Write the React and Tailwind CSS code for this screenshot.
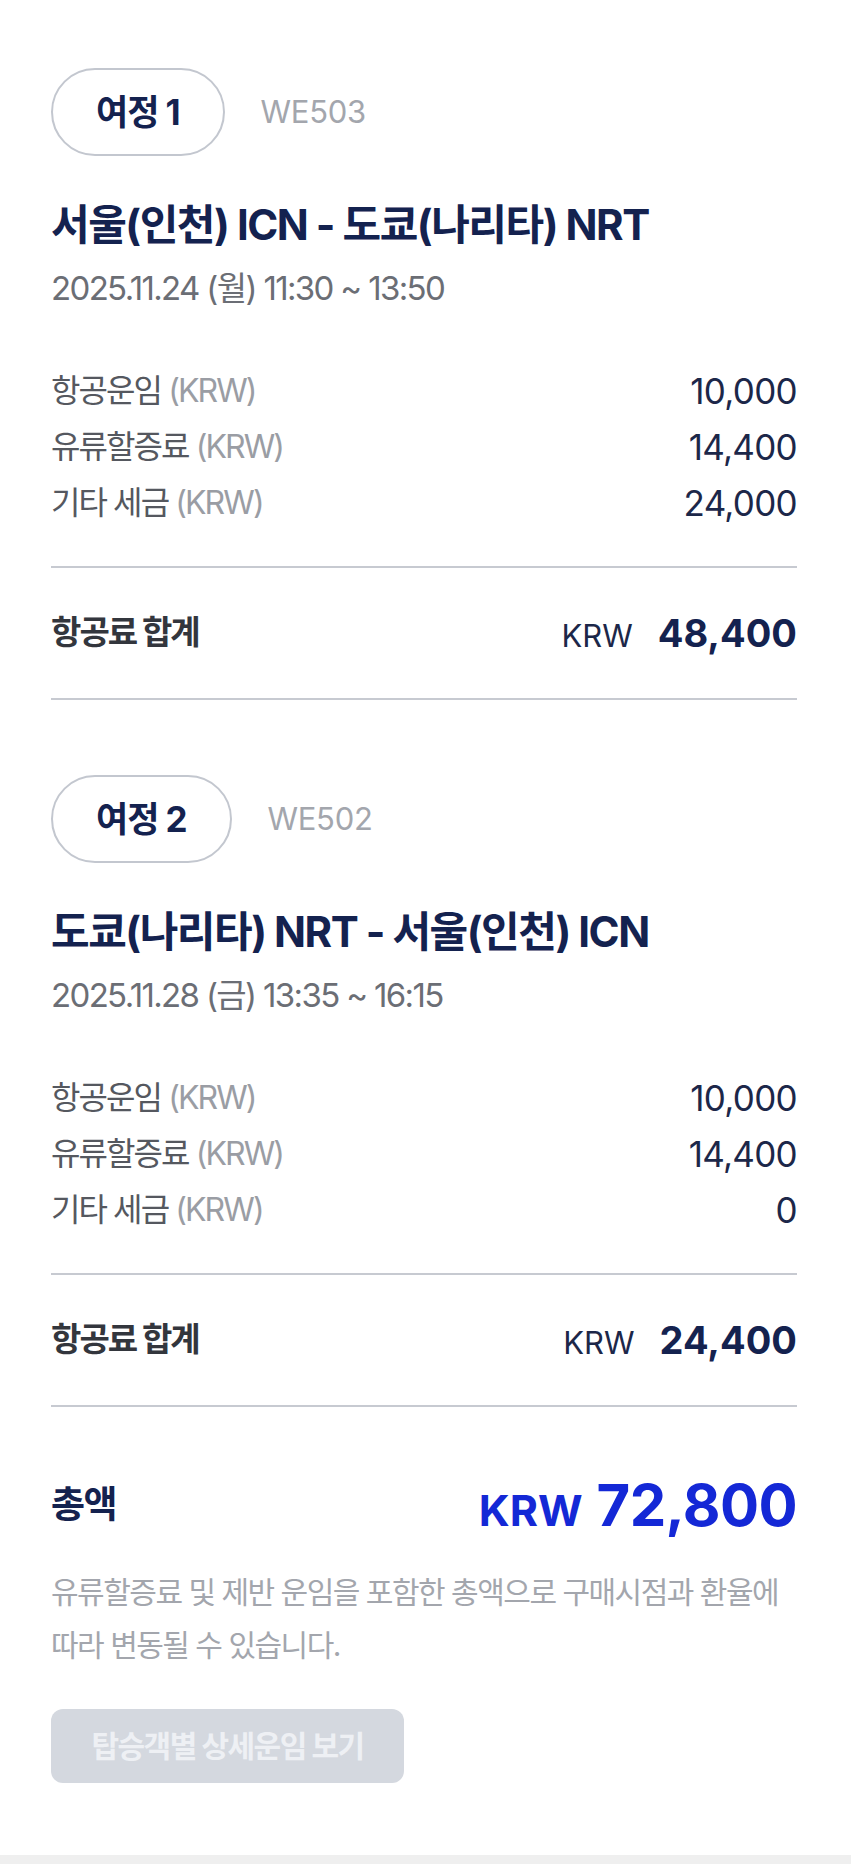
const font = { fontFamily: 'Inter, "Noto Sans CJK KR", sans-serif' };

const trips = [
  {
    label: "여정 1",
    flight: "WE503",
    route: "서울(인천) ICN - 도쿄(나리타) NRT",
    date: "2025.11.24 (월) 11:30 ~ 13:50",
    fares: [
      ["항공운임", "10,000"],
      ["유류할증료", "14,400"],
      ["기타 세금", "24,000"],
    ],
    total: "48,400",
  },
  {
    label: "여정 2",
    flight: "WE502",
    route: "도쿄(나리타) NRT - 서울(인천) ICN",
    date: "2025.11.28 (금) 13:35 ~ 16:15",
    fares: [
      ["항공운임", "10,000"],
      ["유류할증료", "14,400"],
      ["기타 세금", "0"],
    ],
    total: "24,400",
  },
];

function Trip({ trip, first }) {
  return (
    <section className={first ? "pt-[68px]" : "pt-[75px]"}>
      <div className="flex items-center">
        <div className="h-[88px] px-[43px] flex items-center rounded-full border-2 border-[#c3c7cf] text-[35px] font-bold text-[#14224f] tracking-[-0.03em]">
          {trip.label}
        </div>
        <span className="ml-[36px] text-[31px] text-[#a3a6ad] tracking-[-0.01em]">{trip.flight}</span>
      </div>

      <h2 className="mt-[44px] text-[42px] leading-[50px] font-bold text-[#14224f] tracking-[-0.035em]">
        {trip.route}
      </h2>
      <p className="mt-[18px] text-[33px] leading-[40px] text-[#6b6e75] tracking-[-0.05em]">
        {trip.date}
      </p>

      <div className="mt-[55px]">
        {trip.fares.map(([name, value]) => (
          <div key={name} className="flex justify-between items-center h-[56px]">
            <span className="text-[32px] text-[#55585f] tracking-[-0.06em]">
              {name} <span className="text-[#9a9da4]">(KRW)</span>
            </span>
            <span className="text-[35px] text-[#1c2749] tracking-[-0.02em]">{value}</span>
          </div>
        ))}
      </div>

      <div className="mt-[35px] border-t-2 border-[#c7cad1]" />
      <div className="h-[130px] flex items-center justify-between">
        <span className="text-[33px] font-bold text-[#33363d] tracking-[-0.06em]">항공료 합계</span>
        <span className="flex items-baseline">
          <span className="text-[31px] text-[#1c2749]">KRW</span>
          <span className="ml-[25px] text-[38px] font-bold text-[#14224f]">{trip.total}</span>
        </span>
      </div>
      <div className="border-t-2 border-[#c7cad1]" />
    </section>
  );
}

export default function App() {
  return (
    <div className="min-h-[1864px] flex flex-col bg-white" style={font}>
      <main className="flex-1 pl-[51px] pr-[54px]">
        {trips.map((t, i) => (
          <Trip key={t.flight} trip={t} first={i === 0} />
        ))}

        <div className="mt-[66px] h-[64px] flex items-center justify-between">
          <span className="text-[37px] font-bold text-[#14224f] tracking-[-0.04em]">총액</span>
          <span className="flex items-baseline text-[#1428d6] font-bold">
            <span className="text-[43px]">KRW</span>
            <span className="ml-[14px] text-[58px] tracking-[-0.01em]">72,800</span>
          </span>
        </div>

        <p className="mt-[29px] text-[30px] leading-[53px] text-[#a3a6ad] tracking-[-0.05em]">
          유류할증료 및 제반 운임을 포함한 총액으로 구매시점과 환율에
          <br />
          따라 변동될 수 있습니다.
        </p>

        <button
          type="button"
          className="mt-[37px] h-[74px] w-[353px] rounded-[12px] bg-[#d4d8df] text-[30px] font-bold text-[#eef0f4] tracking-[-0.05em]"
        >
          탑승객별 상세운임 보기
        </button>
      </main>
      <div className="h-[9px] bg-[#efefef]" />
    </div>
  );
}
